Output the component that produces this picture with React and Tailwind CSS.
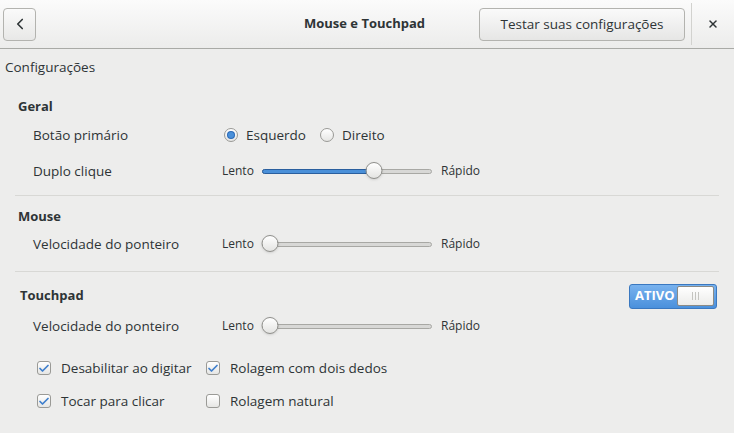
import { Check, ChevronLeft, X } from "lucide-react";

const font = { fontFamily: '"Open Sans", "Noto Sans", sans-serif' };

const Slider = ({ value }) => (
  <div className="flex items-center">
    <span className="w-[40px] text-[12px]">Lento</span>
    <div className="relative h-[18px] w-[170px]">
      <div className="absolute left-0 right-0 top-[7px] h-[5px] rounded-full border border-[#a8a8a4] bg-[#d8d8d6]" />
      {value > 0 && (
        <div
          className="absolute left-0 top-[7px] h-[5px] rounded-full border border-[#2a5f9e] bg-[#4a90d9]"
          style={{ width: `${value * 100}%` }}
        />
      )}
      <div
        className="absolute top-0 h-[17px] w-[17px] -translate-x-1/2 rounded-full border border-[#8e8e8a] bg-gradient-to-b from-white to-[#e4e4e2] shadow-sm"
        style={{ left: `calc(${value * 100}% ${value > 0 ? "+ 0px" : "+ 8px"})` }}
      />
    </div>
    <span className="ml-[9px] text-[12px]">Rápido</span>
  </div>
);

const Radio = ({ checked, label }) => (
  <label className="flex items-center gap-[8px]">
    <span className="flex h-[14px] w-[14px] items-center justify-center rounded-full border border-[#9a9a96] bg-gradient-to-b from-white to-[#e6e6e4]">
      {checked && <span className="h-[6px] w-[6px] rounded-full bg-[#4a90d9] shadow-[0_0_0_1px_#2a6ab8]" />}
    </span>
    <span className="text-[13.5px]">{label}</span>
  </label>
);

const Checkbox = ({ checked, label }) => (
  <label className="flex items-center gap-[10px]">
    <span className="flex h-[14px] w-[14px] items-center justify-center rounded-[3px] border border-[#9a9a96] bg-gradient-to-b from-white to-[#e6e6e4]">
      {checked && <Check size={13} strokeWidth={3.5} className="text-[#3f7fcc]" />}
    </span>
    <span className="text-[13.5px]">{label}</span>
  </label>
);

const Row = ({ label, children, className = "" }) => (
  <div className={`flex h-[28px] items-center ${className}`}>
    <span className="w-[207px] pl-[18px] text-[13.5px]">{label}</span>
    {children}
  </div>
);

const App = () => {
  return (
    <div className="h-[433px] w-[734px] overflow-hidden bg-[#ededec] text-[#2e3436]" style={font}>
      {/* Header */}
      <header className="flex h-[49px] items-center border-b border-[#a9aaa6] bg-gradient-to-b from-[#fbfbfb] to-[#ececeb] pl-[3px]">
        <button className="flex h-[33px] w-[33px] items-center justify-center rounded-[4px] border border-[#b3b3af] bg-gradient-to-b from-[#fafafa] to-[#e8e8e7]">
          <ChevronLeft size={18} strokeWidth={2.2} />
        </button>
        <div className="flex-1 pl-[268px] text-[13px] font-bold">Mouse e Touchpad</div>
        <button className="flex h-[33px] w-[206px] items-center justify-center rounded-[4px] border border-[#b3b3af] bg-gradient-to-b from-[#fafafa] to-[#e6e6e5] text-[13.5px]">
          Testar suas configurações
        </button>
        <div className="ml-[6px] h-[42px] w-px bg-[#d2d2cf]" />
        <div className="flex w-[42px] items-center justify-center">
          <X size={12} strokeWidth={3} />
        </div>
      </header>

      <div className="mt-[4px] flex h-[28px] items-center pl-[5px] text-[13.5px]">Configurações</div>

      <div className="mx-[15px]">
        {/* Geral */}
        <div className="mt-[12px] flex h-[28px] items-center pl-[3px] text-[13px] font-bold">Geral</div>
        <Row label="Botão primário">
          <div className="flex items-center gap-[14px] pl-[2px]">
            <Radio checked label="Esquerdo" />
            <Radio label="Direito" />
          </div>
        </Row>
        <Row label="Duplo clique" className="mt-[8px]">
          <Slider value={0.66} />
        </Row>

        <div className="mt-[10px] border-t border-[#d8d8d5]" />

        {/* Mouse */}
        <div className="mt-[8px] flex h-[26px] items-center pl-[3px] text-[13px] font-bold">Mouse</div>
        <Row label="Velocidade do ponteiro">
          <Slider value={0} />
        </Row>

        <div className="mt-[13px] border-t border-[#d8d8d5]" />

        {/* Touchpad */}
        <div className="mt-[10px] flex h-[28px] items-center justify-between pl-[5px]">
          <span className="text-[13px] font-bold">Touchpad</span>
          <div className="mr-[2px] flex h-[25px] w-[88px] items-center rounded-[3px] border border-[#3a78c0] bg-gradient-to-b from-[#78b2ee] to-[#4a90dc] p-[2px]">
            <span className="flex-1 pl-[3px] text-[13px] font-bold text-white">ATIVO</span>
            <div className="flex h-[20px] w-[37px] items-center justify-center gap-[2px] rounded-[2px] border border-[#8a8a86] bg-gradient-to-b from-white to-[#ececea]">
              <span className="h-[8px] w-px bg-[#c4c4c0]" />
              <span className="h-[8px] w-px bg-[#c4c4c0]" />
              <span className="h-[8px] w-px bg-[#c4c4c0]" />
            </div>
          </div>
        </div>
        <Row label="Velocidade do ponteiro" className="mt-[2px]">
          <Slider value={0} />
        </Row>

        <div className="mt-[14px] grid grid-cols-[169px_1fr] pl-[22px]">
          <div className="flex h-[28px] items-center">
            <Checkbox checked label="Desabilitar ao digitar" />
          </div>
          <div className="flex h-[28px] items-center">
            <Checkbox checked label="Rolagem com dois dedos" />
          </div>
          <div className="mt-[5px] flex h-[28px] items-center">
            <Checkbox checked label="Tocar para clicar" />
          </div>
          <div className="mt-[5px] flex h-[28px] items-center">
            <Checkbox label="Rolagem natural" />
          </div>
        </div>
      </div>
    </div>
  );
};

export default App;
